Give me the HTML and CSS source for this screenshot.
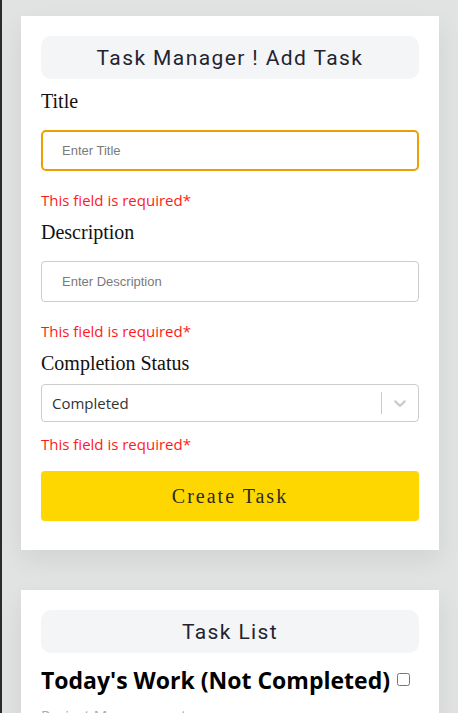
FILE: index.html
```html
<!DOCTYPE html>
<html lang="en">
<head>
<meta charset="utf-8">
<title>Task Manager</title>
<link rel="stylesheet" href="styles.css">
</head>
<body>
<div class="page">
  <section class="card">
    <div class="card-header">Task Manager ! Add Task</div>
    <form class="form">
      <label class="label" for="title">Title</label>
      <input class="input input-focused" id="title" type="text" placeholder="Enter Title">
      <p class="error">This field is required*</p>

      <label class="label" for="desc">Description</label>
      <input class="input" id="desc" type="text" placeholder="Enter Description">
      <p class="error">This field is required*</p>

      <label class="label label-select">Completion Status</label>
      <div class="select">
        <div class="select-value">Completed</div>
        <div class="select-indicators">
          <span class="select-sep"></span>
          <span class="select-arrow">
            <svg width="20" height="20" viewBox="0 0 20 20"><path fill="#cccccc" d="M4.516 7.548c0.436-0.446 1.043-0.481 1.576 0l3.908 3.747 3.908-3.747c0.533-0.481 1.141-0.446 1.574 0 0.436 0.445 0.408 1.197 0 1.615-0.406 0.418-4.695 4.502-4.695 4.502-0.217 0.223-0.502 0.335-0.787 0.335s-0.57-0.112-0.789-0.335c0 0-4.287-4.084-4.695-4.502s-0.436-1.170 0-1.615z"/></svg>
          </span>
        </div>
      </div>
      <p class="error error-select">This field is required*</p>

      <button class="btn" type="button">Create Task</button>
    </form>
  </section>

  <section class="card">
    <div class="card-header">Task List</div>
    <h2 class="task-title">Today's Work (Not Completed) <input class="task-check" type="checkbox"></h2>
    <p class="task-desc">Project Management</p>
  </section>
</div>
</body>
</html>
```
FILE: styles.css
```css
html {
  background: #e1e2e2;
}
body {
  margin: 0;
  min-height: 100vh;
  border-left: 2px solid #2b2b2b;
  background: #e1e2e2;
}
.page {
  padding: 16px 19px 0 19px;
  display: flex;
  flex-direction: column;
  gap: 40px;
}
.card {
  background: #ffffff;
  padding: 20px 20px 29px 20px;
  box-shadow: 0 10px 24px rgba(0, 0, 0, 0.07);
}
.card-header {
  height: 43px;
  background: #f4f5f7;
  border-radius: 10px;
  display: flex;
  align-items: center;
  justify-content: center;
  font-family: Roboto, "Liberation Sans", sans-serif;
  font-size: 21px;
  letter-spacing: 1.4px;
  color: #1f2430;
}
.form {
  display: flex;
  flex-direction: column;
}
.label {
  display: block;
  margin-top: 10px;
  font-family: "Liberation Serif", serif;
  font-size: 20px;
  line-height: 24px;
  color: #111;
}
.input {
  box-sizing: border-box;
  margin-top: 17px;
  height: 41px;
  width: 100%;
  padding: 0 0 0 20px;
  border: 1px solid #cccccc;
  border-radius: 4px;
  font-family: "Liberation Sans", sans-serif;
  font-size: 13px;
  color: #333;
  outline: none;
  background: #fff;
}
.input::placeholder {
  color: #7a7a7a;
}
.input-focused {
  border: 2px solid #e8a100;
  border-radius: 5px;
  padding-left: 19px;
}
.error {
  margin: 19px 0 0 0;
  font-family: "Open Sans", "Noto Sans", sans-serif;
  font-size: 15px;
  line-height: 20px;
  color: #ff1a1a;
}
.label-select {
  margin-top: 10px;
}
.select {
  box-sizing: border-box;
  margin-top: 9px;
  height: 38px;
  border: 1px solid #cccccc;
  border-radius: 4px;
  display: flex;
  align-items: center;
  background: #fff;
}
.select-value {
  flex: 1;
  padding-left: 10px;
  font-family: "Open Sans", "Noto Sans", sans-serif;
  font-size: 15px;
  color: #333333;
}
.select-indicators {
  display: flex;
  align-items: center;
  align-self: stretch;
}
.select-sep {
  width: 1px;
  align-self: stretch;
  margin: 7px 0;
  background: #cccccc;
}
.select-arrow {
  display: flex;
  padding: 8px;
}
.error-select {
  margin-top: 12px;
}
.btn {
  margin-top: 17px;
  height: 50px;
  border: none;
  border-radius: 4px;
  background: #ffd700;
  font-family: "Liberation Serif", serif;
  font-size: 20px;
  letter-spacing: 2px;
  color: #2a2a2a;
  cursor: pointer;
}
.task-title {
  margin: 10px 0 0 0;
  font-family: "Open Sans", "Noto Sans", sans-serif;
  font-weight: 700;
  font-size: 23px;
  line-height: 34px;
  color: #000;
}
.task-check {
  width: 13px;
  height: 13px;
  margin: 0 0 0 1px;
  vertical-align: 3px;
}
.task-desc {
  margin: 8px 0 0 0;
  font-family: "Open Sans", "Noto Sans", sans-serif;
  font-size: 15px;
  color: #aaaaaa;
}
```
